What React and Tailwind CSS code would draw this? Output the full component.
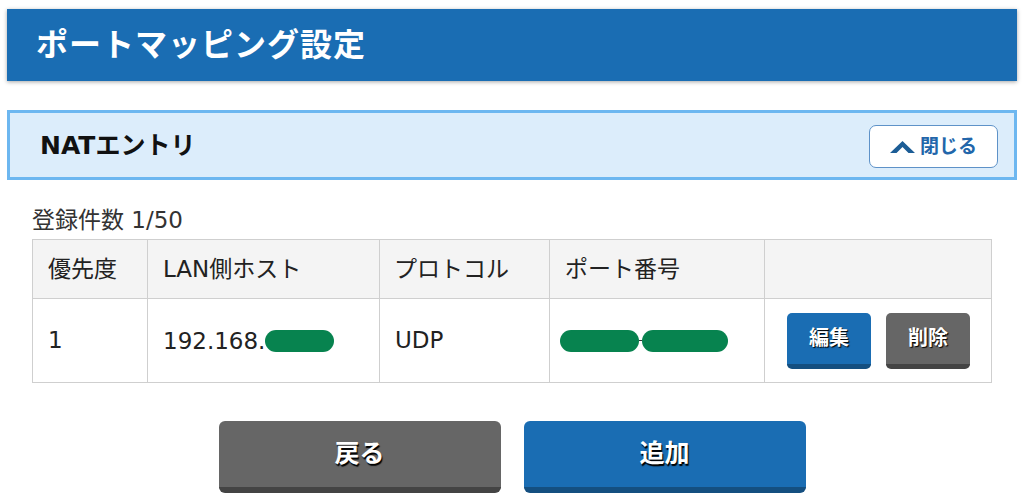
import React from "react";

const font = { fontFamily: '"DejaVu Sans", "Noto Sans CJK JP", sans-serif' };

function Pill({ w }) {
  return <span className="inline-block h-[22px] rounded-full bg-[#07834f] align-middle" style={{ width: w }} />;
}

export default function App() {
  return (
    <div className="w-[1024px] h-[501px] bg-white overflow-hidden text-[#333]" style={font}>
      <div className="px-[7px] pt-[9px]">
        <div className="h-[72px] bg-[#1a6db3] shadow-[0_1px_4px_rgba(0,0,0,0.35)] flex items-center pl-[29px]">
          <h1 className="text-white font-bold text-[32px] tracking-[1px] leading-none">ポートマッピング設定</h1>
        </div>
        <div className="mt-[29px] h-[70px] bg-[#dcedfb] border-[3px] border-[#6db7f0] flex items-center justify-between pl-[30px] pr-[16px]">
          <span className="font-bold text-[25px] text-[#111] leading-none">NATエントリ</span>
          <button className="w-[129px] h-[43px] mt-[2px] rounded-[7px] border border-[#5e92c8] bg-white flex items-center justify-center gap-[5px] text-[#2266aa] font-bold text-[19px]">
            <svg width="25" height="12" viewBox="0 0 25 12" className="mt-[2px]">
              <polygon points="0,12 12.5,0 25,12 18.5,12 12.5,6 6.5,12" fill="#1c5d96" />
            </svg>
            <span className="leading-none">閉じる</span>
          </button>
        </div>
      </div>
      <div className="px-[32px] mt-[29px]">
        <div className="text-[23px] leading-none text-[#333]">登録件数 1/50</div>
        <table className="mt-[7px] w-full border-collapse text-[23px] text-[#222]">
          <thead>
            <tr className="h-[59px] bg-[#f4f4f4]">
              <th className="w-[115px] border border-[#cfcfcf] font-normal text-left pl-[15px]">優先度</th>
              <th className="w-[232px] border border-[#cfcfcf] font-normal text-left pl-[15px]">LAN側ホスト</th>
              <th className="w-[170px] border border-[#cfcfcf] font-normal text-left pl-[14px]">プロトコル</th>
              <th className="w-[215px] border border-[#cfcfcf] font-normal text-left pl-[15px]">ポート番号</th>
              <th className="border border-[#cfcfcf]"></th>
            </tr>
          </thead>
          <tbody>
            <tr className="h-[84px]">
              <td className="border border-[#cfcfcf] pl-[15px]">1</td>
              <td className="border border-[#cfcfcf] pl-[15px]">
                <span className="align-middle">192.168.</span><Pill w={69} />
              </td>
              <td className="border border-[#cfcfcf] pl-[15px]">UDP</td>
              <td className="border border-[#cfcfcf] pl-[10px]">
                <div className="flex items-center">
                  <Pill w={79} />
                  <span className="w-[3px] h-[1px] bg-[#333]" />
                  <Pill w={86} />
                </div>
              </td>
              <td className="border border-[#cfcfcf] pl-[22px]">
                <div className="flex gap-[15px]">
                  <button className="w-[84px] h-[56px] rounded-[5px] bg-[#1a6db3] border-b-[5px] border-[#144f80] text-white font-bold text-[20px] [text-shadow:1px_1px_1px_#000]">編集</button>
                  <button className="w-[84px] h-[56px] rounded-[5px] bg-[#666] border-b-[5px] border-[#444] text-white font-bold text-[20px] [text-shadow:1px_1px_1px_#000]">削除</button>
                </div>
              </td>
            </tr>
          </tbody>
        </table>
        <div className="mt-[38px] flex justify-center gap-[23px]">
          <button className="w-[282px] h-[72px] rounded-[6px] bg-[#666] border-b-[6px] border-[#444] text-white font-bold text-[25px] [text-shadow:1px_2px_1px_#000]">戻る</button>
          <button className="w-[282px] h-[72px] rounded-[6px] bg-[#1a6db3] border-b-[6px] border-[#144f80] text-white font-bold text-[25px] [text-shadow:1px_2px_1px_#000]">追加</button>
        </div>
      </div>
    </div>
  );
}
